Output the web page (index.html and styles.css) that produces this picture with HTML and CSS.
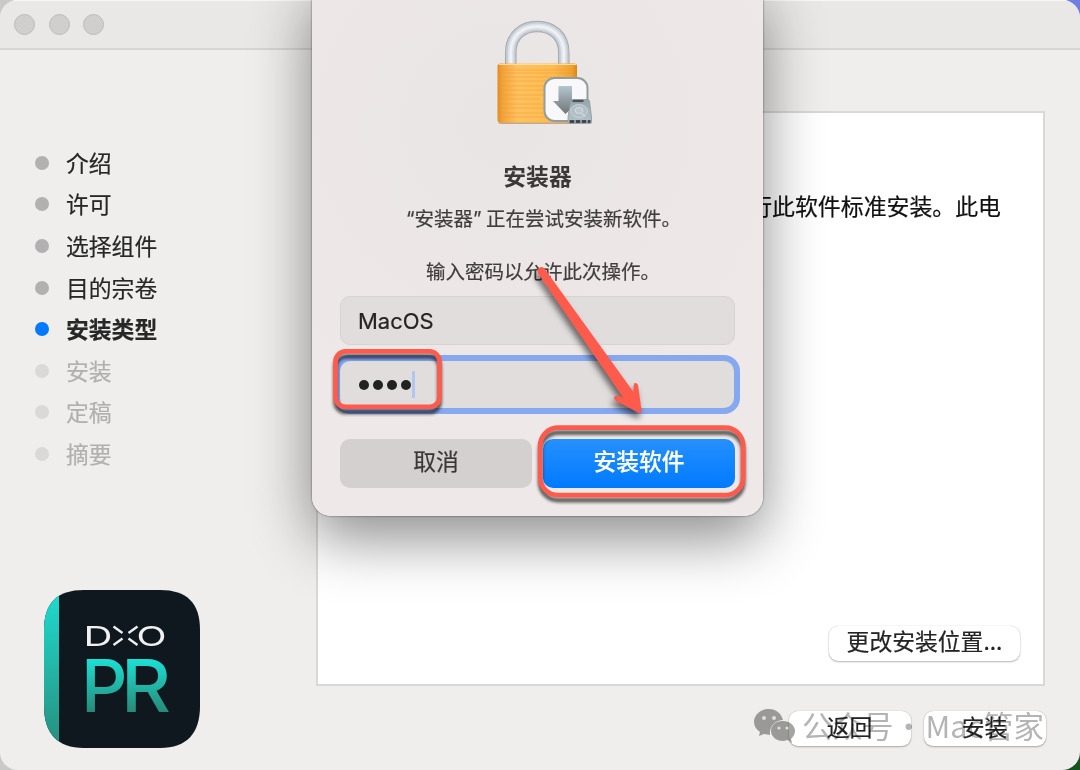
FILE: index.html
```html
<!DOCTYPE html>
<html lang="zh-CN">
<head>
<meta charset="utf-8">
<title>安装器</title>
<link rel="stylesheet" href="styles.css">
</head>
<body>
<div class="window">
  <header class="titlebar"><i class="light"></i><i class="light"></i><i class="light"></i></header>
  <div class="content">
    <aside class="sidebar">
      <ul class="steps">
        <li class="step">介绍</li>
        <li class="step">许可</li>
        <li class="step">选择组件</li>
        <li class="step">目的宗卷</li>
        <li class="step current">安装类型</li>
        <li class="step pending">安装</li>
        <li class="step pending">定稿</li>
        <li class="step pending">摘要</li>
      </ul>
      <svg class="app-logo" width="160" height="162" viewBox="0 0 160 162">
        <defs>
          <linearGradient id="teal" x1="0" y1="0" x2="0" y2="1"><stop offset="0" stop-color="#1eddd2"/><stop offset="1" stop-color="#288d7b"/></linearGradient>
          <linearGradient id="pr" gradientUnits="userSpaceOnUse" x1="0" y1="71" x2="0" y2="125"><stop offset="0" stop-color="#1ce0d5"/><stop offset="1" stop-color="#278876"/></linearGradient>
          <clipPath id="tile"><path d="M42 2H118C145 2 158 15 158 42V118C158 145 145 160 118 160H42C15 160 2 145 2 118V42C2 15 15 2 42 2Z"/></clipPath>
        </defs>
        <g clip-path="url(#tile)"><path fill="#0f181e" d="M0 0H160V162H0Z"/><path fill="url(#teal)" d="M0 0H17V162H0Z"/></g>
        <g class="logo-name">
          <text x="41.5" y="57.5" textLength="29" lengthAdjust="spacingAndGlyphs">D</text>
          <text x="94.5" y="57.5" textLength="30" lengthAdjust="spacingAndGlyphs">O</text>
        </g>
        <path d="M71.500 38.500l9 6.500M71.500 57l9-6.500M95.500 38.500l-9 6.500M95.500 57l-9-6.500" stroke="#eee" stroke-width="2.400" fill="none"/>
        <text class="logo-code" x="39" y="124" textLength="46.500" lengthAdjust="spacingAndGlyphs">P</text>
        <text class="logo-code" x="79" y="124" textLength="50" lengthAdjust="spacingAndGlyphs">R</text>
      </svg>
    </aside>
    <main class="main">
      <section class="panel">
        <p class="summary">行此软件标准安装。此电</p>
        <button class="btn wide">更改安装位置...</button>
      </section>
      <footer class="actions"><button class="btn">返回</button><button class="btn">安装</button></footer>
    </main>
  </div>
</div>

<div class="watermark">
  <svg width="42" height="35" viewBox="0 0 42 35">
    <path fill="#a4a4a3" d="M15 0C6 0 0 6 0 13c0 4 2 7 6 10l-1 4 5-2 6 1C15 17 22 11 29 11C27 4 22 0 15 0Z"/>
    <path fill="#a4a4a3" d="M29 12C21 12 17 17 17 22s5 10 12 10l5-1 4 3-1-4c2-2 4-5 4-8 0-6-6-10-12-10Z"/>
    <g fill="#efeeec"><circle cx="10" cy="9" r="2"/><circle cx="20" cy="9" r="2"/><circle cx="25" cy="19" r="1.6"/><circle cx="33" cy="19" r="1.6"/></g>
  </svg>
  <span class="mark-label">公众号</span><span class="mark-dot">·</span><span class="mark-name">Mac管家</span>
</div>

<div class="dialog">
  <svg class="lock" width="100" height="108" viewBox="0 0 100 108">
    <defs>
      <linearGradient id="brass" x1="0" x2="1"><stop offset="0" stop-color="#df8b22"/><stop offset=".06" stop-color="#f3a23a"/><stop offset=".25" stop-color="#ffc260"/><stop offset=".7" stop-color="#fdbb50"/><stop offset=".93" stop-color="#f1a133"/><stop offset="1" stop-color="#d9861c"/></linearGradient>
      <linearGradient id="down" x1="0" y1="0" x2="0" y2="1"><stop offset="0" stop-color="#b4c5ce"/><stop offset="1" stop-color="#707577"/></linearGradient>
      <linearGradient id="disk" x1="0" y1="0" x2="0" y2="1"><stop offset="0" stop-color="#96a4ac"/><stop offset="1" stop-color="#b5c4cb"/></linearGradient>
    </defs>
    <g fill="none">
      <path d="M15.800 46V33.500C15.800 17 27 7.500 42.200 7.500S68.800 17 68.800 33.500V46" stroke="#a4a8b0" stroke-width="11.500"/>
      <path d="M15.800 46V33.500C15.800 17 27 7.500 42.200 7.500S68.800 17 68.800 33.500V46" stroke="#c6ccd4" stroke-width="9.500"/>
      <path d="M15.800 46V33.500C15.800 17 27 7.500 42.200 7.500S68.800 17 68.800 33.500V46" stroke="#dde2e8" stroke-width="6"/>
      <path d="M15.800 46V33.500C15.800 17 27 7.500 42.200 7.500S68.800 17 68.800 33.500V46" stroke="#eef1f5" stroke-width="2.500"/>
    </g>
    <rect x="3" y="45" width="79" height="60" rx="3" fill="#a7783a" opacity=".55"/>
    <rect x="2.500" y="44.500" width="79.500" height="59" rx="3" fill="url(#brass)"/>
    <path d="M4 45.500H81" stroke="#ffe098"/>
    <path d="M5 51H79M5 54H79M5 58H65M5 62H79M5 67H50M5 71H60M5 76H50M5 80H45M5 85H50M5 89H50M5 94H50M5 98H60" stroke="#e9972d" stroke-width="1" opacity=".45"/>
    <rect x="49.500" y="59" width="43" height="43" rx="10" fill="#f8f8fb" stroke="#929e9e" stroke-width="2"/>
    <path d="M63.500 67H77V82H84L70.500 95 58 82H63.500Z" fill="url(#down)"/>
    <path d="M75.500 82Q76 80.500 78 80.500H92Q94 80.500 94.500 82L96.500 98V103Q96.500 104.500 95 104.500H75Q73 104.500 73 103V98Z" fill="url(#disk)" stroke="#8c999f" stroke-width=".8"/>
    <path d="M74.500 102.500H95.500" stroke="#384043" stroke-width="2.800"/><path d="M77.500 82H88.500" stroke="#4b5355" stroke-width="2.200"/><path d="M79 102.500h2M85 102.500h2M91 102.500h2" stroke="#8b989c" stroke-width="2.800"/>
    <ellipse cx="84" cy="92" rx="8.500" ry="6.500" fill="#b1bfc4" stroke="#cdd8dc" stroke-width=".8"/><ellipse cx="84" cy="91.500" rx="4" ry="3" fill="#b9c6cb" stroke="#dfe7ea" stroke-width=".7"/><path d="M87 95l3 2" stroke="#e7edef"/>
  </svg>
  <h1 class="dialog-title">安装器</h1>
  <p class="dialog-text first"><span class="quote">“</span>安装器<span class="quote close">”</span>正在尝试安装新软件。</p>
  <p class="dialog-text second">输入密码以允许此次操作。</p>
  <div class="field">MacOS</div>
  <div class="field focused"><i class="pip"></i><i class="pip"></i><i class="pip"></i><i class="pip"></i><i class="caret"></i></div>
  <div class="choices"><button class="choice">取消</button><button class="choice primary">安装软件</button></div>
</div>

<svg class="annotations" width="1080" height="770" viewBox="0 0 1080 770">
  <g class="callouts" fill="none" stroke="#ff5b4c" stroke-width="4.800">
    <rect x="335.500" y="351.400" width="104" height="55.500" rx="10"/>
    <rect x="540.200" y="427.700" width="203" height="67.500" rx="18"/>
  </g>
  <path class="arrow" fill="#ff5b4c" d="M544.500 268.500Q541 265.500 538 269Q536.500 271 538.500 274L623 397.500L617 395.500Q614 396 614 398.500L616 401L639 413Q642 414 641.500 410L638 385Q637 382.500 634.500 383L633.500 386V392Z"/>
</svg>
</body>
</html>
```
FILE: styles.css
```css
* { box-sizing: border-box; }

body {
  margin: 0;
  width: 1080px;
  height: 770px;
  overflow: hidden;
  position: relative;
  font-family: "Noto Sans CJK SC", sans-serif;
  background: conic-gradient(#6f7fe3 25%, #14551d 0 50%, #c9c9c8 0);
}

p, h1, ul { margin: 0; padding: 0; }
button { border: 0; padding: 0; font-family: inherit; }

.window {
  height: 770px;
  border-radius: 18px;
  overflow: hidden;
  background: #efeeec;
  display: flex;
  flex-direction: column;
}

.titlebar {
  height: 50px;
  flex: none;
  display: flex;
  align-items: center;
  gap: 13.5px;
  padding: 0 14px 1px;
  background: #e9e8e6;
  border-top: 1px solid #f8f8f7;
  border-bottom: 2px solid #d6d5d3;
}

.light {
  width: 21px;
  height: 21px;
  border-radius: 50%;
  background: #d0cfce;
  border: 1px solid #bbbab9;
}

.content { display: flex; flex: 1; }

.sidebar { width: 316px; padding: 91.5px 0 0 34.5px; flex: none; }

.steps { list-style: none; height: 446.5px; }

.step {
  height: 41.6px;
  display: flex;
  align-items: center;
  gap: 17.5px;
  font-size: 22.8px;
  color: #272727;
  -webkit-text-stroke: .2px;
}

.step::before {
  content: "";
  width: 14px;
  height: 14px;
  margin-top: 1px;
  border-radius: 50%;
  background: #b1b1b1;
}

.step.current { font-weight: 700; }
.step.current::before { background: #007aff; }
.step.pending { color: #b1b0af; }
.step.pending::before { background: #dad9d8; }

.app-logo { display: block; margin-left: 7.5px; }
.logo-name { font: 400 27.5px Inter, sans-serif; fill: #f1f1f1; }
.logo-code { font: 500 73px Inter, sans-serif; fill: url(#pr); }

.main {
  width: 731px;
  padding-top: 61px;
  display: flex;
  flex-direction: column;
}

.panel {
  width: 729px;
  height: 575px;
  border: 2px solid #d9d8d7;
  background: #fff;
  display: flex;
  flex-direction: column;
  justify-content: space-between;
  align-items: flex-end;
  padding: 75px 23px 23.5px;
}

.summary {
  font-size: 22.9px;
  line-height: 34px;
  color: #111;
  margin-right: 19px;
  -webkit-text-stroke: .2px;
}

.btn {
  width: 122px;
  height: 35px;
  border-radius: 9px;
  background: #fff;
  color: #242424;
  font-size: 22.8px;
  line-height: 30px;
  padding-bottom: 4px;
  box-shadow: 0 0 1px rgba(0, 0, 0, .25), 0 1px 2px rgba(0, 0, 0, .28);
  -webkit-text-stroke: .2px;
}

.btn.wide { width: 191px; }

.actions {
  display: flex;
  justify-content: flex-end;
  gap: 13px;
  padding: 25px 1.5px 0 0;
}

.watermark {
  position: absolute;
  left: 754px;
  top: 707px;
  display: flex;
  height: 36px;
  line-height: 36px;
  font-size: 30.5px;
  font-weight: 400;
  color: #b4b4b4;
  mix-blend-mode: multiply;
  white-space: nowrap;
}

.watermark svg { margin-top: 2px; }
.mark-label { margin-left: 6px; }
.mark-dot { width: 30px; text-align: center; }
.mark-name { margin-left: 2px; }

.dialog {
  position: absolute;
  left: 312px;
  top: -20px;
  width: 451px;
  height: 535.5px;
  padding: 39px 28px 0;
  border-radius: 19px;
  background: radial-gradient(circle at 42% 27%, #e9e5e4, #eee9e8 65%);
  box-shadow: 0 0 2px rgba(0, 0, 0, .65), 0 22px 60px rgba(0, 0, 0, .46);
  display: flex;
  flex-direction: column;
}

.lock { margin-left: 155px; flex: none; }

.dialog-title {
  margin-top: 32px;
  text-align: center;
  font-size: 22.8px;
  line-height: 34px;
  font-weight: 700;
  color: #3d3838;
}

.dialog-text {
  font-size: 19.5px;
  line-height: 28px;
  color: #423d3d;
  white-space: nowrap;
  -webkit-text-stroke: .2px;
}

.dialog-text.first { margin: 11px 0 0 63.5px; }
.dialog-text.second { margin: 23.5px 0 0 86px; }

.quote {
  display: inline-block;
  width: 11px;
  text-align: right;
  font-family: Inter, sans-serif;
}

.quote.close { width: 13px; text-align: left; }

.field {
  width: 395px;
  height: 49px;
  flex: none;
  margin-top: 11.5px;
  padding-left: 17px;
  border: 1px solid #d7d3d2;
  border-radius: 10px;
  background: #e1dddc;
  display: flex;
  align-items: center;
  font: 22px Inter, sans-serif;
  color: #252323;
  -webkit-text-stroke: .2px;
}

.field.focused {
  width: 394px;
  height: 47px;
  margin-top: 16px;
  padding-left: 19px;
  border: 0;
  box-shadow: 0 0 0 6px #86a8ef;
  gap: 4px;
}

.pip { width: 10px; height: 10px; border-radius: 50%; background: #222; }
.caret { width: 3px; height: 27px; background: #b1c6f0; margin-left: -3px; }

.choices { display: flex; gap: 11px; margin-top: 31px; }

.choice {
  width: 192px;
  height: 49px;
  border-radius: 10px;
  background: #d4d0cf;
  color: #3a3737;
  font-size: 22.8px;
  line-height: 44px;
  padding-bottom: 5px;
  -webkit-text-stroke: .2px;
}

.choice.primary {
  background: linear-gradient(#2690ff, #007aff);
  color: #fff;
  font-weight: 500;
}

.annotations { position: absolute; left: 0; top: 0; }
.callouts { filter: drop-shadow(0 5px 1.5px rgba(0, 0, 0, .6)); }
.arrow { filter: drop-shadow(-2px 5px 3px rgba(0, 0, 0, .55)); }
```
